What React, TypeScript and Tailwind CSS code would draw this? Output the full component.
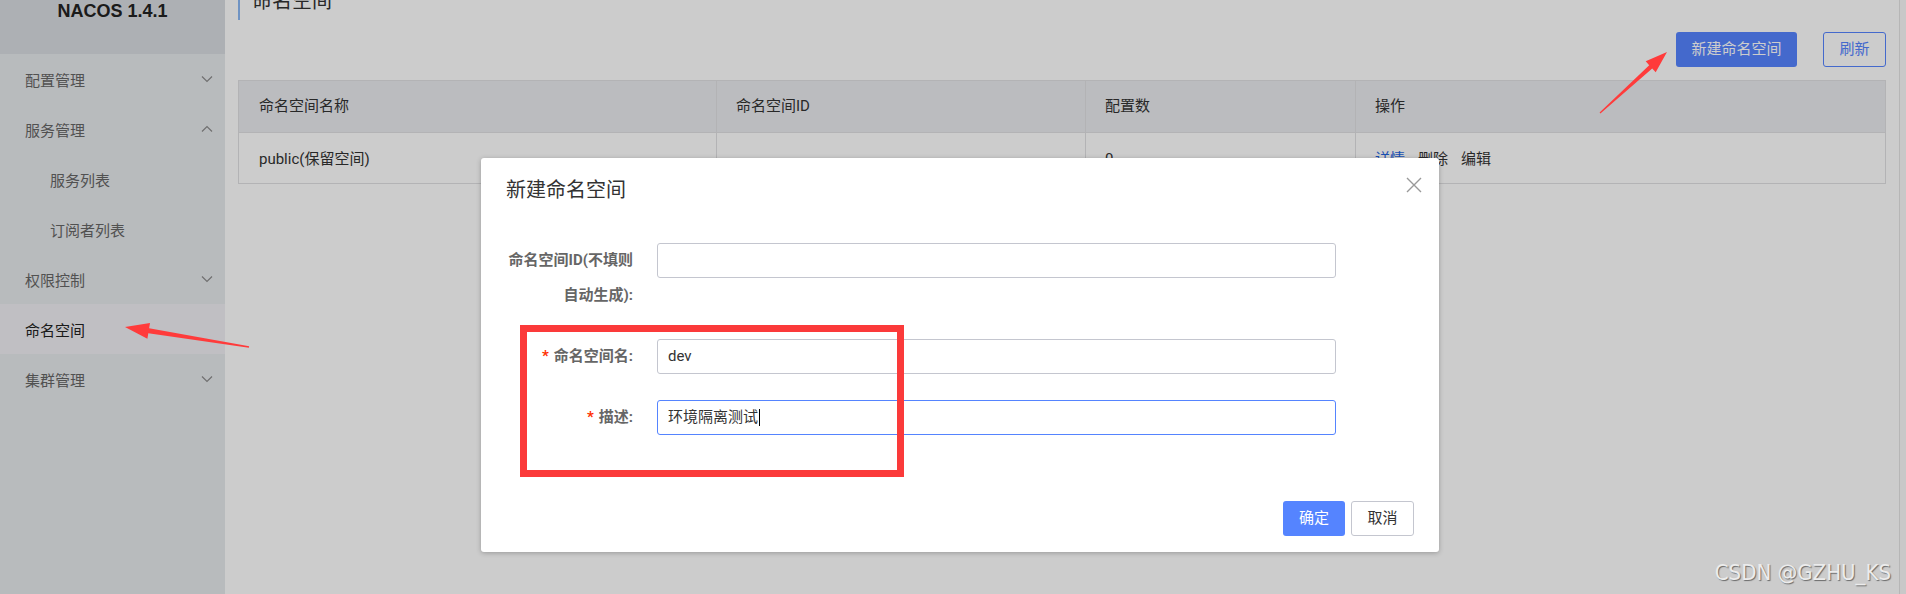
import React from "react";

type MenuItem = {
  label: string;
  sub?: boolean;
  active?: boolean;
  chevron?: "up" | "down";
};

const menu: MenuItem[] = [
  { label: "配置管理", chevron: "down" },
  { label: "服务管理", chevron: "up" },
  { label: "服务列表", sub: true },
  { label: "订阅者列表", sub: true },
  { label: "权限控制", chevron: "down" },
  { label: "命名空间", active: true },
  { label: "集群管理", chevron: "down" },
];

const Chevron = ({ dir }: { dir: "up" | "down" }) => (
  <svg width="12" height="8" viewBox="0 0 12 8" fill="none">
    <polyline
      points={dir === "down" ? "1,1.5 6,6.5 11,1.5" : "1,6.5 6,1.5 11,6.5"}
      stroke="#8c8c8c"
      strokeWidth="1.2"
    />
  </svg>
);

const Sidebar = () => (
  <aside className="w-[225px] shrink-0 bg-[#e7eaed] flex flex-col">
    <div className="h-[54px] bg-[#d9dce1] pt-[1px] text-center font-['Liberation_Sans',sans-serif] text-[18px] leading-[20px] font-bold text-[#222]">
      NACOS 1.4.1
    </div>
    {menu.map((item) => (
      <div
        key={item.label}
        className={`h-[50px] flex items-center justify-between pr-[12px] text-[15px] ${
          item.sub ? "pl-[50px]" : "pl-[25px]"
        } ${item.active ? "bg-[#f0eff4] text-[#222]" : "text-[#666]"}`}
      >
        <span className="pt-[5px]">{item.label}</span>
        {item.chevron && <Chevron dir={item.chevron} />}
      </div>
    ))}
  </aside>
);

const NamespaceTable = () => (
  <div className="mt-[13px] border border-[#e0e0e3] text-[15px] text-[#333]">
    <div className="grid grid-cols-[477px_369px_270px_1fr] h-[51px] bg-[#eaebef]">
      <div className="flex items-center px-[20px]">命名空间名称</div>
      <div className="flex items-center px-[19px] border-l border-[#e0e0e3]">命名空间ID</div>
      <div className="flex items-center px-[19px] border-l border-[#e0e0e3]">配置数</div>
      <div className="flex items-center px-[19px] border-l border-[#e0e0e3]">操作</div>
    </div>
    <div className="grid grid-cols-[477px_369px_270px_1fr] h-[51px] border-t border-[#e0e0e3]">
      <div className="flex items-center px-[20px] pt-[2px]">public(保留空间)</div>
      <div className="flex items-center px-[19px] border-l border-[#e0e0e3]"></div>
      <div className="flex items-center px-[19px] pt-[2px] border-l border-[#e0e0e3]">0</div>
      <div className="flex items-center gap-[13px] px-[19px] pt-[2px] border-l border-[#e0e0e3]">
        <span className="text-[#1f64e0]">详情</span>
        <span>删除</span>
        <span>编辑</span>
      </div>
    </div>
  </div>
);

const Field = ({
  label,
  required,
  value,
  focused,
}: {
  label: React.ReactNode;
  required?: boolean;
  value?: string;
  focused?: boolean;
}) => (
  <div className="flex items-start">
    <div className="w-[151px] shrink-0 pr-[24px] text-right text-[15px] leading-[35px] font-bold text-[#666] whitespace-nowrap">
      {required && <span className="mr-[5px] text-[#ff3000]">*</span>}
      {label}
    </div>
    <div
      className={`w-[679px] h-[35px] rounded-[3px] border px-[10px] flex items-center text-[15px] text-[#333] ${
        focused ? "border-[#5584ff]" : "border-[#c4c6cf]"
      }`}
    >
      {value}
      {focused && <span className="ml-[1px] w-[1px] h-[17px] bg-black" />}
    </div>
  </div>
);

const CreateNamespaceDialog = () => (
  <div className="absolute left-[481px] top-[158px] w-[958px] bg-white rounded-[3px] shadow-[0_1px_5px_rgba(0,0,0,0.25)]">
    <div className="flex items-start justify-between pl-[25px] pr-[17px] pt-[18px]">
      <h2 className="text-[20px] leading-[28px] text-[#333]">新建命名空间</h2>
      <button className="mt-[1px]">
        <svg width="16" height="16" viewBox="0 0 16 16">
          <path d="M1 1 L15 15 M15 1 L1 15" stroke="#999" strokeWidth="1.4" />
        </svg>
      </button>
    </div>
    <div className="mt-[39px] pl-[25px] flex flex-col gap-[26px]">
      <Field
        label={
          <>
            命名空间ID(不填则
            <br />
            自动生成):
          </>
        }
      />
      <Field label="命名空间名:" required value="dev" />
      <Field label="描述:" required value="环境隔离测试" focused />
    </div>
    <div className="mt-[66px] pb-[16px] pr-[25px] flex justify-end gap-[6px] text-[15px]">
      <button className="w-[62px] h-[35px] rounded-[3px] bg-[#5584ff] text-white">确定</button>
      <button className="w-[63px] h-[35px] rounded-[3px] border border-[#c4c6cf] bg-white text-[#333]">
        取消
      </button>
    </div>
  </div>
);

// red marks drawn on top of the screenshot
const Annotations = () => (
  <svg className="absolute inset-0 pointer-events-none" width="1906" height="594">
    <rect x="523.5" y="328.5" width="377" height="145" fill="none" stroke="#fb3a3a" strokeWidth="7" />
    <polygon
      fill="#ff3b3b"
      points="125,327 150,322.9 149.1,328.3 249.1,346.3 248.9,347.7 148.3,333.3 147.4,338.7"
    />
    <polygon
      fill="#ff3b3b"
      points="1667,52 1655.7,72.3 1652.2,68.4 1600.4,113.4 1599.6,112.6 1649.2,65.2 1645.7,61.3"
    />
  </svg>
);

export default function App() {
  return (
    <div className="relative h-[594px] w-[1906px] overflow-hidden flex bg-white font-['Roboto','Noto_Sans_CJK_SC',sans-serif]">
      <Sidebar />
      <main className="flex-1 px-[13px]">
        <div className="-mt-[13px] h-[33px] border-l-2 border-[#8bb8f4] pl-[12px] text-[20px] leading-[28px] text-[#333]">
          命名空间
        </div>
        <div className="mt-[12px] flex justify-end gap-[26px] text-[15px]">
          <button className="w-[121px] h-[35px] rounded-[3px] bg-[#5584ff] text-white">新建命名空间</button>
          <button className="w-[63px] h-[35px] rounded-[3px] border border-[#5584ff] text-[#5584ff]">刷新</button>
        </div>
        <NamespaceTable />
      </main>
      <div className="w-[7px] shrink-0 border-l border-[#e4e4e4] bg-[#fafafa]" />

      <div className="absolute inset-0 bg-black/20" />
      <CreateNamespaceDialog />
      <Annotations />
      <div className="absolute top-[562px] right-[15px] font-['Liberation_Sans_Narrow','DejaVu_Sans_Condensed',sans-serif] text-[22px] leading-[22px] text-[#ececec] [text-shadow:1px_1px_1px_#6a6a6a]">
        CSDN @GZHU_KS
      </div>
    </div>
  );
}
